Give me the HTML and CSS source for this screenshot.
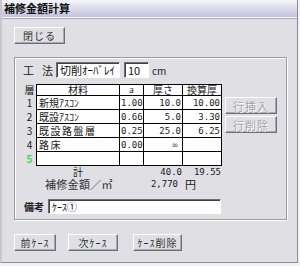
FILE: index.html
```html
<!DOCTYPE html>
<html>

<head>
	<meta http-equiv="Content-Type" content="text/html; charset=utf-8"/>
	<title>補修金額計算</title>
	<link rel="stylesheet" href="styles.css">
</head>

<body>
<div class="window">
	<div class="titlebar">補修金額計算</div>
	<div class="body">
		<div class="top">
			<button class="btn close">閉じる</button>
		</div>

		<div class="group">
			<div class="method">
				<span class="lbl">工</span><span class="lbl">法</span>
				<input class="field method-name" value="切削ｵｰﾊﾞﾚｲ"/>
				<input class="field method-depth" value="10"/>
				<span class="unit">cm</span>
			</div>

			<div class="layers">
				<table class="grid">
					<colgroup>
						<col class="c-no"/>
						<col class="c-mat"/>
						<col class="c-a"/>
						<col class="c-thick"/>
						<col class="c-conv"/>
					</colgroup>
					<thead>
						<tr>
							<td class="no">層</td>
							<td class="first center">材料</td>
							<td class="center small">a</td>
							<td class="center">厚さ</td>
							<td class="center">換算厚</td>
						</tr>
					</thead>
					<tbody>
						<tr>
							<td class="no">1</td>
							<td class="first">新規ｱｽｺﾝ</td>
							<td class="num">1.00</td>
							<td class="num">10.0</td>
							<td class="num">10.00</td>
						</tr>
						<tr>
							<td class="no">2</td>
							<td class="first">既設ｱｽｺﾝ</td>
							<td class="num">0.66</td>
							<td class="num">5.0</td>
							<td class="num">3.30</td>
						</tr>
						<tr>
							<td class="no">3</td>
							<td class="first wide">既設路盤層</td>
							<td class="num">0.25</td>
							<td class="num">25.0</td>
							<td class="num">6.25</td>
						</tr>
						<tr>
							<td class="no">4</td>
							<td class="first wide">路床</td>
							<td class="num">0.00</td>
							<td class="num inf">∞</td>
							<td class="num"></td>
						</tr>
						<tr>
							<td class="no new">5</td>
							<td class="first"></td>
							<td class="num"></td>
							<td class="num"></td>
							<td class="num"></td>
						</tr>
					</tbody>
					<tfoot>
						<tr>
							<td></td>
							<td class="center">計</td>
							<td></td>
							<td class="num">40.0</td>
							<td class="num">19.55</td>
						</tr>
					</tfoot>
				</table>

				<div class="side">
					<button class="btn" disabled>行挿入</button>
					<button class="btn" disabled>行削除</button>
				</div>
			</div>

			<div class="cost">
				<span class="cost-label">補修金額／㎡</span>
				<span class="cost-value">2,770</span>
				<span class="cost-unit">円</span>
			</div>

			<div class="note">
				<span class="note-label">備考</span>
				<input class="field note-text" value="ｹｰｽ①"/>
			</div>
		</div>

		<div class="nav">
			<button class="btn prev">前ｹｰｽ</button>
			<button class="btn next">次ｹｰｽ</button>
			<button class="btn del">ｹｰｽ削除</button>
		</div>
	</div>
</div>
</body>

</html>
```

FILE: styles.css
```css
html {
	font-size: 11px;
	font-family: "Noto Sans CJK JP", "DejaVu Sans", sans-serif;
}

body {
	margin: 0;
	background: #f2f2f4;
}

.window {
	width: 295px;
	height: 262px;
	background: #dfdfe4;
	border-left: 2px solid #c8c8d0;
	border-right: 1px solid #8c8c96;
	border-bottom: 1px solid #8c8c96;
	color: #202020;
}

.titlebar {
	height: 17px;
	line-height: 17px;
	padding-left: 2px;
	font-weight: bold;
	color: #101010;
	background: linear-gradient(#f6f6fb, #e6e6f0 30%, #c2c2dc);
	border-bottom: 1px solid #fafaff;
	box-shadow: 0 1px 0 #a8a8b6;
}

.body {
	padding: 9px 0 0 12px;
}

.btn {
	font-family: inherit;
	font-size: 10px;
	letter-spacing: 1px;
	color: #303030;
	background: #dfdfe4;
	border: 1px solid;
	border-color: #ffffff #6e6e76 #6e6e76 #ffffff;
	box-shadow: inset -1px -1px 0 #a8a8b0;
	height: 17px;
	padding: 0;
}

.btn:disabled {
	color: #a4a4aa;
	text-shadow: 1px 1px 0 #ffffff;
}

.close {
	width: 51px;
}

.group {
	margin-top: 13px;
	padding: 4px 0 0 8px;
	box-sizing: border-box;
	width: 273px;
	height: 163px;
	border: 1px solid #9a9aa2;
	box-shadow: inset 1px 1px 0 #ffffff, 1px 1px 0 #ffffff;
}

.method {
	display: flex;
	align-items: center;
	height: 16px;
}

.lbl {
	width: 11px;
	margin-right: 8px;
}

.lbl + .lbl {
	margin-right: 3px;
}

.field {
	font-family: inherit;
	font-size: 11px;
	height: 16px;
	box-sizing: border-box;
	padding: 0 3px;
	background: #ffffff;
	border: 1px solid;
	border-color: #6e6e76 #ffffff #ffffff #6e6e76;
	box-shadow: inset 1px 1px 0 #404040;
	color: #101010;
}

.method-name {
	width: 64px;
}

.method-depth {
	width: 25px;
	margin-left: 4px;
}

.unit {
	margin-left: 3px;
	font-size: 10px;
}

.layers {
	display: flex;
	margin-top: 6px;
}

.grid {
	table-layout: fixed;
	border-collapse: separate;
	border-spacing: 0;
	width: 199px;
	font-size: 10px;
}

.c-no { width: 13px; }
.c-mat { width: 84px; }
.c-a { width: 24px; }
.c-thick { width: 39px; }
.c-conv { width: 39px; }

.grid td {
	padding: 0 2px;
	line-height: 10px;
	white-space: nowrap;
}

.grid thead td,
.grid tbody td {
	background: #ffffff;
	border-right: 1px solid #000000;
	border-bottom: 1px solid #000000;
}

.grid thead td {
	border-top: 1px solid #000000;
	height: 9px;
}

.grid tbody td {
	height: 13px;
}

.grid tfoot td {
	height: 12px;
}

.grid td.first {
	border-left: 1px solid #000000;
}

.grid td.wide {
	letter-spacing: 1.5px;
}

.grid td.no,
.grid thead td.no,
.grid tbody td.no {
	background: none;
	border: none;
	padding: 0;
	text-align: center;
}

.grid td.new {
	color: #3ed84a;
	font-weight: bold;
}

.center {
	text-align: center;
}

.grid td.small {
	font-size: 8px;
}

.grid td.num {
	padding: 0 1px;
	text-align: right;
	font-family: "DejaVu Sans Mono", monospace;
	font-size: 9px;
}

.grid td.inf {
	color: #404040;
	padding-right: 4px;
}

.side {
	display: flex;
	flex-direction: column;
	gap: 2px;
	margin: 13px 0 0 3px;
}

.side .btn {
	width: 52px;
	height: 17px;
	font-size: 11px;
}

.cost {
	display: flex;
	align-items: center;
	height: 14px;
	margin-top: -1px;
}

.cost-label {
	margin-left: 22px;
	width: 89px;
	font-size: 11px;
	letter-spacing: 0.3px;
	color: #303030;
}

.cost-value {
	width: 44px;
	text-align: right;
	font-family: "DejaVu Sans Mono", monospace;
	font-size: 9px;
}

.cost-unit {
	margin-left: 7px;
}

.note {
	display: flex;
	align-items: center;
	margin-top: 8px;
}

.note-label {
	width: 24px;
	font-weight: bold;
	font-size: 10px;
	margin-left: 1px;
}

.note-text {
	width: 173px;
	height: 15px;
	font-size: 10px;
}

.nav {
	display: flex;
	margin-top: 14px;
}

.prev {
	width: 42px;
}

.next {
	width: 50px;
	margin-left: 12px;
}

.del {
	width: 49px;
	margin-left: 15px;
}
```
